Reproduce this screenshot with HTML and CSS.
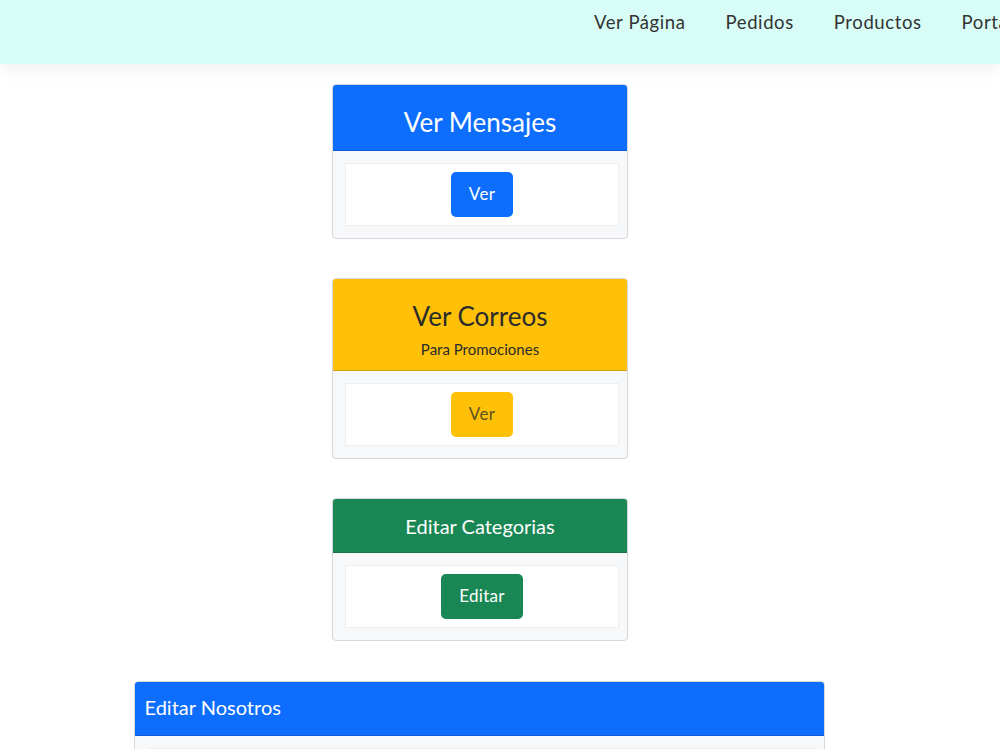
FILE: index.html
```html
<!DOCTYPE html>
<html lang="es">
<head>
<meta charset="utf-8">
<title>Panel</title>
<link rel="stylesheet" href="styles.css">
</head>
<body>
	<header class="barra">
		<ul class="menu">
			<li><a href="#">Ver Página</a></li>
			<li><a href="#">Pedidos</a></li>
			<li><a href="#">Productos</a></li>
			<li><a href="#">Portafolio</a></li>
		</ul>
	</header>

	<main class="panel">
		<div class="tarjeta chica">
			<div class="cabecera azul">
				<h3>Ver Mensajes</h3>
			</div>
			<div class="cuerpo">
				<div class="caja">
					<a class="boton azul" href="#">Ver</a>
				</div>
			</div>
		</div>

		<div class="tarjeta chica">
			<div class="cabecera amarillo">
				<h3>Ver Correos</h3>
				<p class="sub">Para Promociones</p>
			</div>
			<div class="cuerpo">
				<div class="caja">
					<a class="boton amarillo" href="#">Ver</a>
				</div>
			</div>
		</div>

		<div class="tarjeta chica">
			<div class="cabecera verde baja">
				<h5>Editar Categorias</h5>
			</div>
			<div class="cuerpo">
				<div class="caja">
					<a class="boton verde" href="#">Editar</a>
				</div>
			</div>
		</div>

		<div class="tarjeta grande">
			<div class="cabecera azul izq">
				<h5>Editar Nosotros</h5>
			</div>
			<div class="cuerpo">
				<table class="tabla">
					<tr>
						<td class="col1">Titulo</td>
						<td>Quienes somos</td>
					</tr>
				</table>
			</div>
		</div>
	</main>
</body>
</html>
```

FILE: styles.css
```css
*{
	box-sizing: border-box;
}

body{
	margin: 0;
	font-family: "Lato", "Liberation Sans", sans-serif;
	color: #212529;
	background: white;
	overflow: hidden;
}

.barra{
	height: 64px;
	background-color: #d8fdf7;
	box-shadow: 0 4px 18px rgba(0,0,0,0.07);
	overflow: hidden;
	position: relative;
}

.menu{
	list-style: none;
	margin: 0;
	padding: 11px 0 0 574px;
	display: flex;
	white-space: nowrap;
}

.menu a{
	display: block;
	padding: 0 20px;
	font-size: 18.5px;
	letter-spacing: 0.6px;
	color: #333;
	text-decoration: none;
}

.panel{
	display: flex;
	flex-direction: column;
	align-items: center;
	gap: 39px;
	padding: 20px 40px 0 0;
}

.tarjeta{
	border: 1px solid #d6d8db;
	border-radius: 4px;
	background-color: #f7f8fa;
	overflow: hidden;
}

.chica{
	width: 296px;
}

.grande{
	width: 691px;
	margin-top: 1px;
	margin-right: 2px;
}

.cabecera{
	text-align: center;
	padding: 21px 16px 12px;
	border-bottom: 1px solid rgba(0,0,0,0.15);
}

.cabecera h3{
	margin: 0;
	font-size: 26px;
	font-weight: 400;
	line-height: 32px;
}

.cabecera h5{
	margin: 0;
	font-size: 20px;
	font-weight: 400;
	line-height: 24px;
}

.cabecera .sub{
	margin: 7px 0 0;
	font-size: 15px;
	line-height: 20px;
}

.baja{
	padding: 15px 16px 14px;
}

.izq{
	text-align: left;
	padding: 13px 10px 16px;
}

.cabecera.azul{
	background-color: #0d6efd;
	color: white;
}

.cabecera.amarillo{
	background-color: #ffc107;
	color: #2b2b2b;
	padding-bottom: 11px;
}

.cabecera.verde{
	background-color: #198754;
	color: white;
}

.cuerpo{
	padding: 12px 8px 12px 12px;
}

.caja{
	display: flex;
	justify-content: center;
	background: white;
	border: 1px solid #eceef0;
	padding: 8px 0;
}

.boton{
	display: block;
	height: 45px;
	line-height: 44px;
	padding: 0 18px;
	border-radius: 5px;
	font-size: 17px;
	letter-spacing: 0.3px;
	text-decoration: none;
	color: white;
}

.boton.azul{
	background-color: #0d6efd;
}

.boton.amarillo{
	background-color: #ffc107;
	color: #5c5322;
}

.boton.verde{
	background-color: #198754;
}

.tabla{
	width: 100%;
	border-collapse: collapse;
	background: white;
	font-size: 15px;
}

.tabla td{
	border: 1px solid #eceef0;
	padding: 34px 10px 10px;
}

.tabla .col1{
	width: 116px;
}
```
